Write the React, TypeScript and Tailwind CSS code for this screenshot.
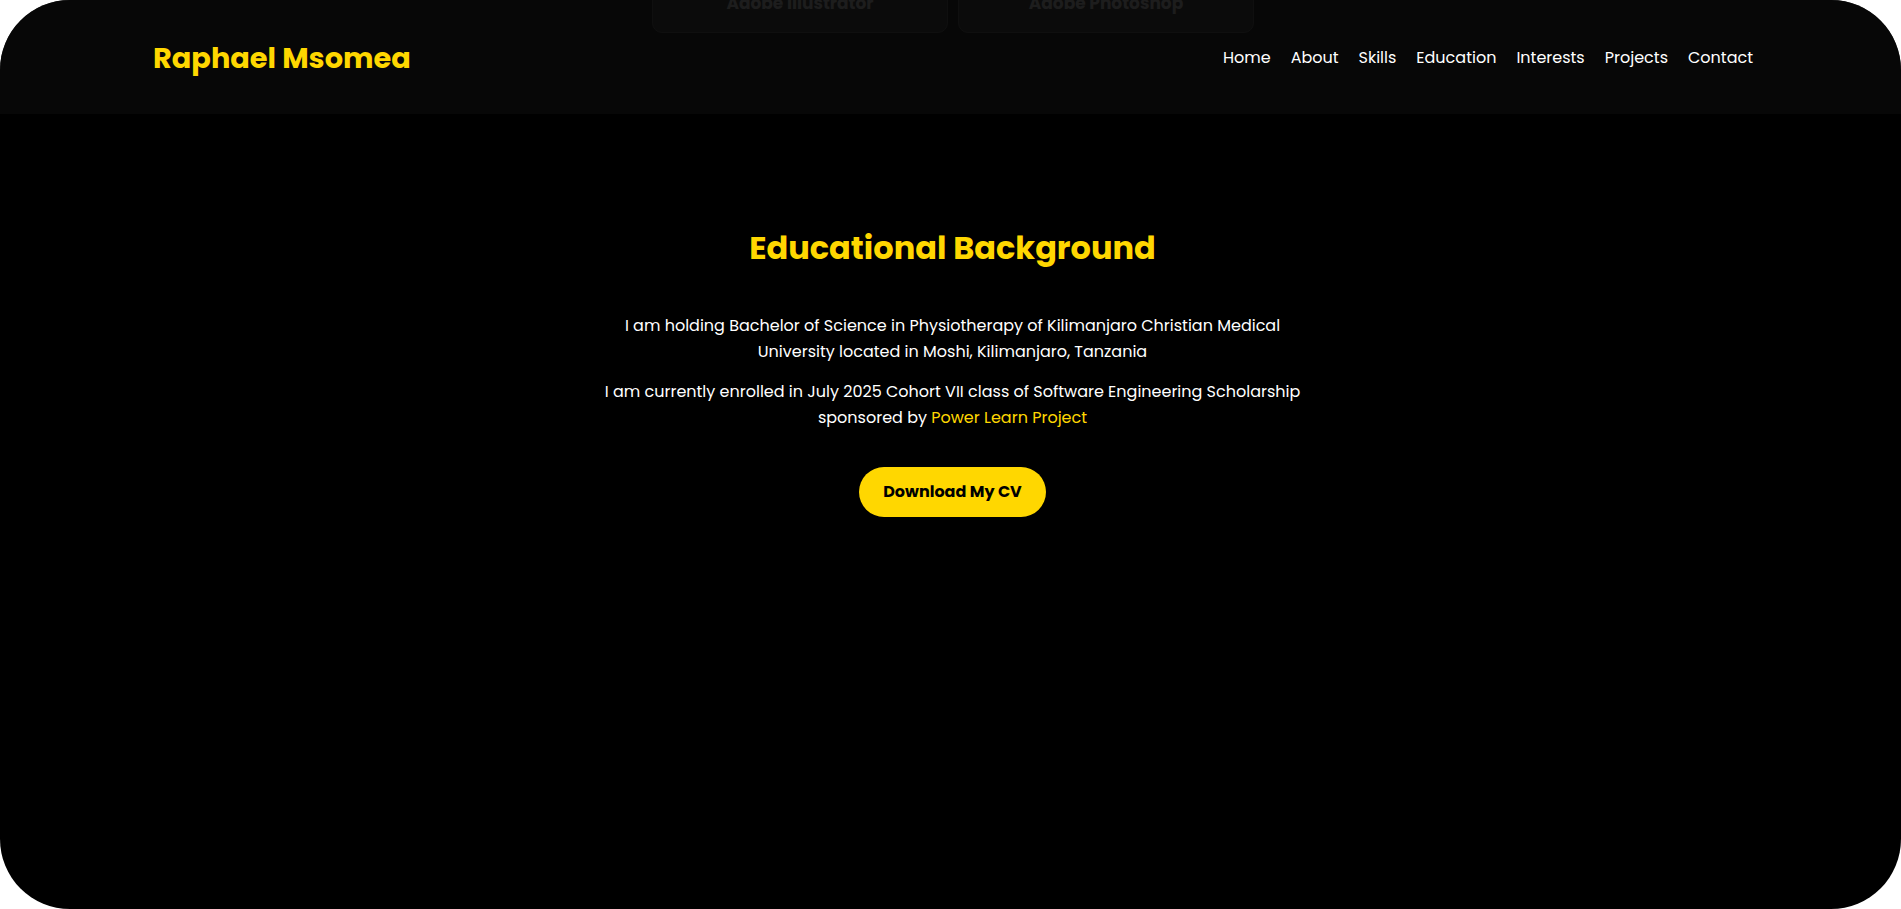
import React from "react";

const navLinks = ["Home", "About", "Skills", "Education", "Interests", "Projects", "Contact"];
const lastSkills = ["Adobe Illustrator", "Adobe Photoshop"];

export default function App() {
  return (
    <div className="bg-white w-full h-[909px] font-['Poppins','Inter',sans-serif]">
      <div className="relative h-[909px] w-full overflow-hidden rounded-[70px] bg-black text-white">
        {/* header sits over the scrolled page */}
        <header className="absolute top-0 left-0 z-10 w-full h-[114px] bg-[#0a0a0a]/70">
          <div className="flex h-full items-center justify-between pl-[153px] pr-[148px] pt-[2px]">
            <a href="#" className="text-[28.8px] leading-none font-bold text-[#ffd700]">
              Raphael Msomea
            </a>
            <nav className="flex items-center gap-[20px] text-[16px] font-normal text-white">
              {navLinks.map((l) => (
                <a key={l} href={`#${l.toLowerCase()}`} className="hover:text-[#ffd700] transition-colors">
                  {l}
                </a>
              ))}
            </nav>
          </div>
        </header>

        {/* tail of the skills grid, scrolled under the header */}
        <div className="flex h-[33px] items-end justify-center gap-[10px] overflow-hidden pl-[5px]">
          {lastSkills.map((s) => (
            <div
              key={s}
              className="flex h-[120px] w-[296px] shrink-0 items-end justify-center rounded-[10px] border border-[#1c1c1c] bg-[#0f0f0f] pb-[16px]"
            >
              <span className="text-[17px] leading-[26px] font-bold text-[#4a4a4a]">{s}</span>
            </div>
          ))}
        </div>

        {/* education */}
        <section id="education" className="flex flex-col items-center pt-[195px] pl-[4px] text-center">
          <h2 className="text-[32px] leading-[40px] font-bold text-[#ffd700]">Educational Background</h2>
          <div className="mt-[45px] flex w-[700px] flex-col gap-[14px] text-[16px] leading-[26px]">
            <p>
              I am holding Bachelor of Science in Physiotherapy of Kilimanjaro Christian Medical
              <br />
              University located in Moshi, Kilimanjaro, Tanzania
            </p>
            <p>
              I am currently enrolled in July 2025 Cohort VII class of Software Engineering Scholarship
              <br />
              sponsored by <span className="text-[#ffd700]">Power Learn Project</span>
            </p>
          </div>
          <a
            href="#"
            className="mt-[36px] flex h-[50px] w-[187px] items-center justify-center rounded-full bg-[#ffd700] text-[16px] font-bold text-black"
          >
            Download My CV
          </a>
        </section>
      </div>
    </div>
  );
}
